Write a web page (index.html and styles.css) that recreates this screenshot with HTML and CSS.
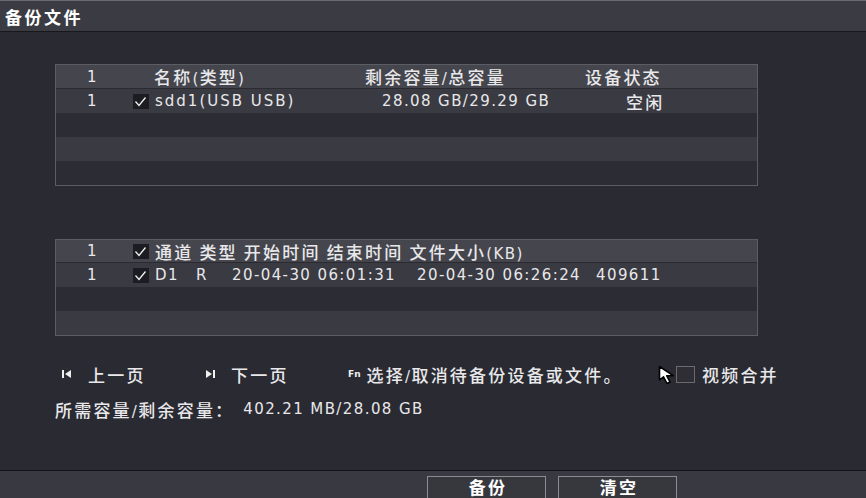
FILE: index.html
```html
<!DOCTYPE html>
<html lang="zh">
<head>
<meta charset="utf-8">
<title>备份文件</title>
<link rel="stylesheet" href="styles.css">
</head>
<body>
<div class="screen">
  <header class="titlebar"><span class="c">备份文件</span></header>
  <main class="content">
    <section class="table t1">
      <div class="row head">
        <span class="w-idx">1</span>
        <span class="w-name-h c">名称<span class="l">(</span>类型<span class="l">)</span></span>
        <span class="w-cap-h c">剩余容量<span class="l">/</span>总容量</span>
        <span class="c">设备状态</span>
      </div>
      <div class="row light">
        <span class="w-idx2">1</span>
        <span class="cb"><svg viewBox="0 0 15 15" width="15" height="15"><path d="M2.5 7.5 L6 11.5 L12.5 3.5" fill="none" stroke="#f2f2f2" stroke-width="1.3"/></svg></span>
        <span class="w-name">sdd1(USB USB)</span>
        <span class="w-cap">28.08 GB/29.29 GB</span>
        <span class="c">空闲</span>
      </div>
      <div class="row dark"></div>
      <div class="row light"></div>
      <div class="row dark"></div>
    </section>

    <section class="table t2">
      <div class="row head h2">
        <span class="w-idx2">1</span>
        <span class="cb"><svg viewBox="0 0 15 15" width="15" height="15"><path d="M2.5 7.5 L6 11.5 L12.5 3.5" fill="none" stroke="#f2f2f2" stroke-width="1.3"/></svg></span>
        <span class="c">通道 类型 开始时间 结束时间 文件大小<span class="l">(KB)</span></span>
      </div>
      <div class="row light">
        <span class="w-idx2">1</span>
        <span class="cb"><svg viewBox="0 0 15 15" width="15" height="15"><path d="M2.5 7.5 L6 11.5 L12.5 3.5" fill="none" stroke="#f2f2f2" stroke-width="1.3"/></svg></span>
        <span class="w-ch">D1</span>
        <span class="w-type">R</span>
        <span class="w-start">20-04-30 06:01:31</span>
        <span class="w-end">20-04-30 06:26:24</span>
        <span>409611</span>
      </div>
      <div class="row dark"></div>
      <div class="row light"></div>
    </section>

    <nav class="nav">
      <span class="nav-item prev">
        <svg class="ico" viewBox="0 0 10 10" width="10" height="10"><rect x="0" y="1" width="2" height="8" fill="#f0f0f0"/><path d="M9 1 L3 5 L9 9 Z" fill="#f0f0f0"/></svg>
        <span class="c">上一页</span>
      </span>
      <span class="nav-item next">
        <svg class="ico" viewBox="0 0 10 10" width="10" height="10"><path d="M1 1 L7 5 L1 9 Z" fill="#f0f0f0"/><rect x="8" y="1" width="2" height="8" fill="#f0f0f0"/></svg>
        <span class="c">下一页</span>
      </span>
      <span class="nav-item fn">
        <span class="fnlabel">Fn</span>
        <span class="c">选择<span class="l">/</span>取消待备份设备或文件。</span>
      </span>
      <span class="nav-item merge">
        <svg class="cursor" viewBox="0 0 18 20" width="18" height="20"><path d="M1.5 1.5 L1.5 15 L5.5 11.8 L9 18.5 L12 17 L8.8 10.8 L15.5 10.8 Z" fill="#ffffff" stroke="#000000" stroke-width="1.6" stroke-linejoin="round"/></svg>
        <span class="box"></span>
        <span class="c">视频合并</span>
      </span>
    </nav>

    <p class="capacity"><span class="c">所需容量<span class="l">/</span>剩余容量：</span><span class="l val">402.21 MB/28.08 GB</span></p>
  </main>
  <footer class="bottombar">
    <button class="btn c">备份</button>
    <button class="btn c">清空</button>
  </footer>
</div>
</body>
</html>
```

FILE: styles.css
```css
* { box-sizing: border-box; }
html, body { margin: 0; padding: 0; }
body {
  width: 866px;
  height: 498px;
  overflow: hidden;
  background: #2a2a32;
  color: #e8e8ea;
  font-family: "DejaVu Sans", "Noto Sans CJK SC", sans-serif;
  font-size: 15px;
  letter-spacing: 1.4px;
}
.screen {
  display: flex;
  flex-direction: column;
  height: 498px;
}
.c {
  font-family: "Noto Sans CJK SC", "DejaVu Sans", sans-serif;
  font-size: 17px;
  font-weight: 500;
  letter-spacing: 2.2px;
}
.c .l, .l {
  font-family: "DejaVu Sans", sans-serif;
  font-size: 15px;
  font-weight: 400;
  letter-spacing: 1.4px;
}
.titlebar {
  height: 32px;
  background: #3b3b43;
  border-top: 1px solid #6a6a72;
  border-bottom: 1px solid #17171c;
  padding-left: 5px;
  display: flex;
  align-items: center;
  color: #ffffff;
}
.titlebar .c { font-weight: 700; font-size: 17px; letter-spacing: 2.5px; }
.content {
  flex: 1;
  padding: 32px 0 0 55px;
  display: flex;
  flex-direction: column;
}
.table {
  width: 703px;
  border: 1px solid #5c5c64;
  display: flex;
  flex-direction: column;
}
.t2 { margin-top: 53px; }
.row {
  height: 24px;
  display: flex;
  align-items: center;
  white-space: nowrap;
}
.head {
  background: #45454d;
  border-bottom: 1px solid #2a2a30;
}
.h2 { height: 23px; }
.light { background: #3a3a42; }
.dark { background: #2c2c34; }
.w-idx { width: 98px; padding-left: 31px; }
.w-idx2 { width: 77px; padding-left: 31px; }
.w-name-h { width: 211px; }
.w-cap-h { width: 220px; }
.w-name { width: 227px; letter-spacing: 2px; }
.w-cap { width: 244px; }
.cb {
  width: 16px;
  height: 15px;
  background: #1c1c22;
  margin-right: 6px;
  display: flex;
}
.w-ch { width: 41px; }
.w-type { width: 36px; }
.w-start { width: 185px; }
.w-end { width: 179px; }
.nav {
  margin-top: 27px;
  height: 22px;
  display: flex;
  align-items: center;
  white-space: nowrap;
}
.nav-item { display: flex; align-items: center; }
.prev { padding-left: 7px; width: 150px; }
.next { width: 143px; }
.ico { margin-right: 16px; }
.fn { width: 312px; }
.fnlabel {
  font-size: 9px;
  font-weight: 700;
  letter-spacing: 0;
  margin-right: 6px;
  color: #f0f0f0;
}
.cursor { flex: none; margin-top: 2px; margin-right: 0; margin-left: -2px; }
.box {
  width: 19px;
  height: 17px;
  border: 1px solid #6a6a70;
  background: #2e2e34;
  margin-right: 7px;
}
.capacity {
  margin: 13px 0 0 0;
  height: 22px;
  display: flex;
  align-items: center;
  white-space: nowrap;
}
.val { margin-left: 9px; }
.bottombar {
  height: 28px;
  background: #393941;
  border-top: 1px solid #131317;
  display: flex;
  padding: 5px 0 0 427px;
  gap: 12px;
}
.btn {
  width: 119px;
  height: 28px;
  background: #37373e;
  border: 1px solid #8c8c92;
  color: #ffffff;
  font-weight: 700;
  padding: 0;
  display: flex;
  justify-content: center;
  align-items: flex-start;
  line-height: 20px;
  padding-left: 3px;
}
```
